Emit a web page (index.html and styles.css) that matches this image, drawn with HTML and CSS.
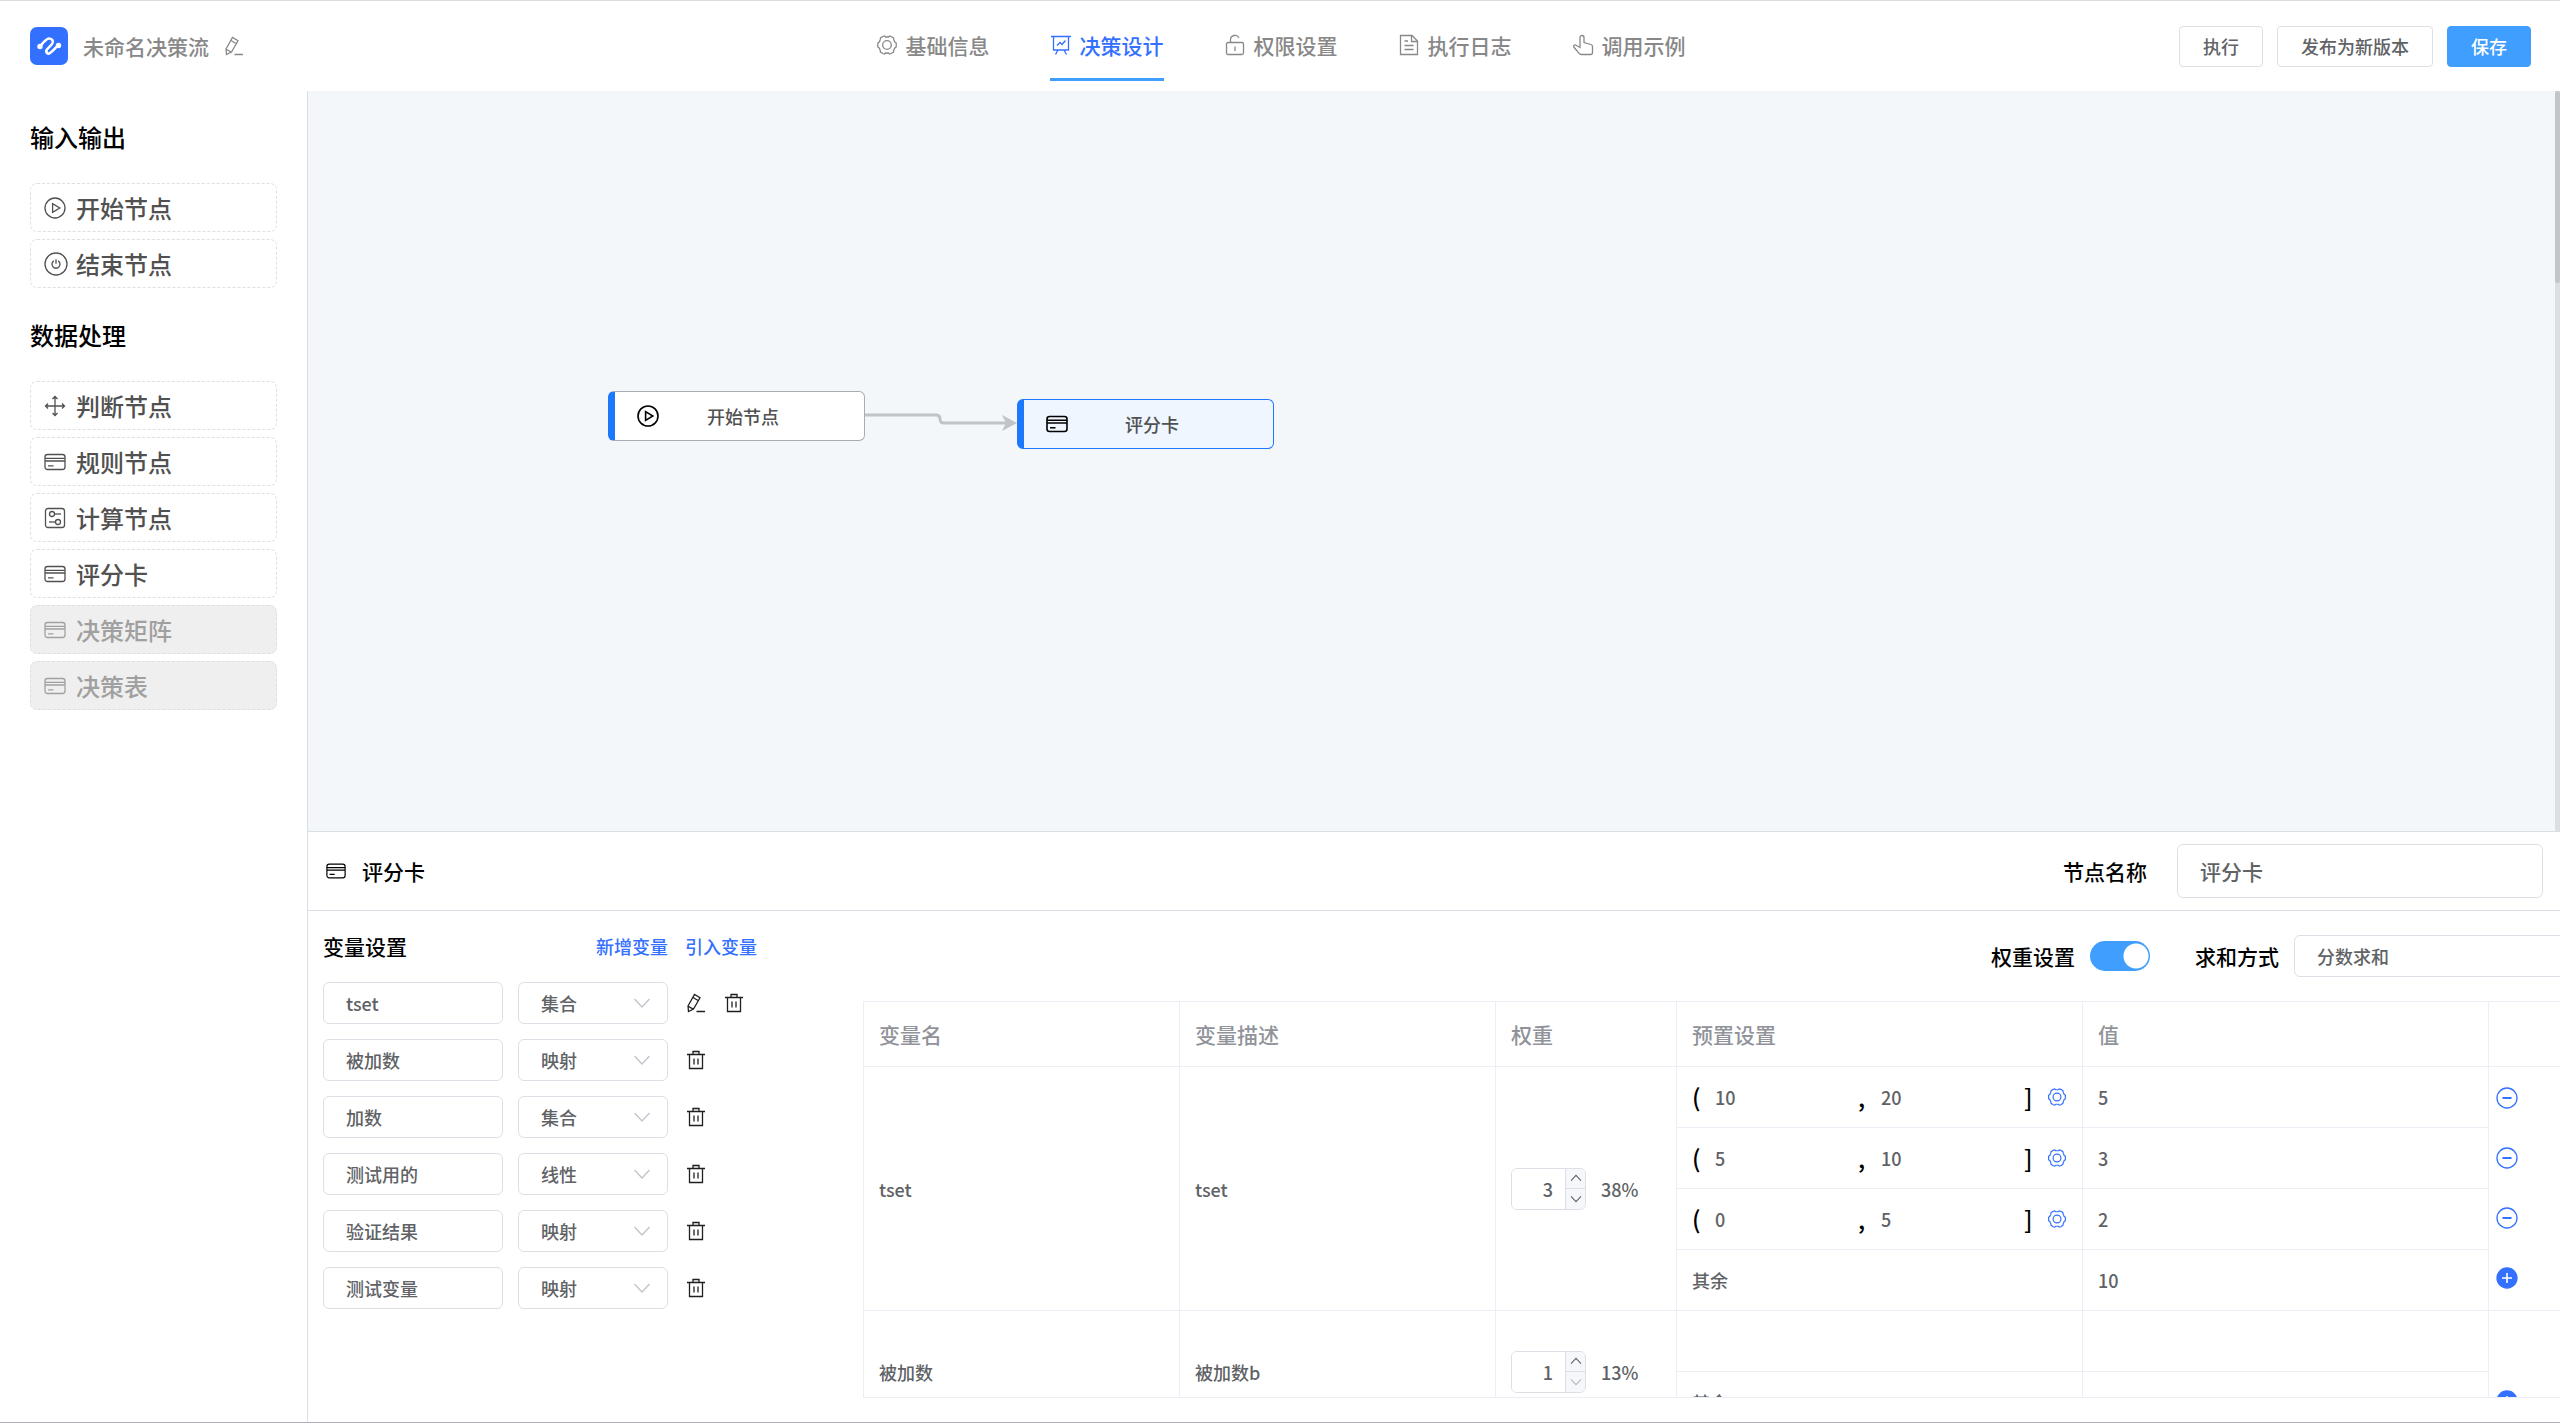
FILE: index.html
```html
<!DOCTYPE html>
<html lang="zh-CN">
<head>
<meta charset="utf-8">
<title>未命名决策流</title>
<meta name="viewport" content="width=device-width, initial-scale=1">
<link rel="stylesheet" href="styles.css">
</head>
<body>
<svg class="sprite" aria-hidden="true">
  <symbol id="i-card" viewBox="0 0 22 22"><rect x="1" y="3.5" width="20" height="15" rx="2.5"/><path d="M1 7.3h20M1 10h20M4 14.8h5.5"/></symbol>
  <symbol id="i-play" viewBox="0 0 22 22"><circle cx="11" cy="11" r="10"/><path d="M8.6 6.6v8.8l7.2-4.4z"/></symbol>
  <symbol id="i-power" viewBox="0 0 24 24"><circle cx="12" cy="12" r="11"/><path d="M9.8 8.9a4 4 0 1 0 4.4 0M12 7.2v4.6"/></symbol>
  <symbol id="i-move" viewBox="0 0 22 22"><path d="M1.5 11h19M11 1.5v19M4 8.500L1.500 11 4 13.500M18 8.500l2.500 2.500-2.500 2.500M8.500 4L11 1.500 13.500 4M8.500 18l2.500 2.500 2.500-2.500"/></symbol>
  <symbol id="i-calc" viewBox="0 0 22 22"><rect x="1.500" y="1.500" width="19" height="19" rx="2.500"/><circle cx="8" cy="7" r="2.500"/><path d="M10.500 7H17"/><circle cx="14" cy="15" r="2.500"/><path d="M11.500 15H5"/></symbol>
  <symbol id="i-gear" viewBox="0 0 22 22"><path d="M6.800 2.500l1.700-.5 1 1h3l1-1 1.700.5 2.300 1.500.3 1.700 1 2.300 1.400 1v4l-1.400 1-1 2.300-.3 1.700-2.300 1.500-1.700.5-1-1h-3l-1 1-1.700-.5L4.500 18l-.3-1.700-1-2.300-1.400-1V9l1.400-1 1-2.300L4.500 4z"/><circle cx="11" cy="11" r="4.300"/></symbol>
  <symbol id="i-board" viewBox="0 0 22 22"><path d="M1 2.500h20M3.500 2.500v13.500h15V2.500M8 16l-2.500 4.500M14 16l2.500 4.500M7 11.500l3-3 2 2 3.500-4"/></symbol>
  <symbol id="i-lock" viewBox="0 0 22 22"><rect x="2.500" y="8.500" width="17" height="12" rx="1.500"/><path d="M6.500 8.500V6a4.500 4.500 0 0 1 8.500-2.200M11 12.500v4.500"/></symbol>
  <symbol id="i-doc" viewBox="0 0 22 22"><path d="M2.500 1.500h11.500L19.500 7v13.500h-17zM13.500 1.500v6h6M6.500 7h3.500M6.500 11.500h9M6.500 15.500h9"/></symbol>
  <symbol id="i-hand" viewBox="0 0 22 22"><path d="M8 13.500V3.500a2 2 0 0 1 4 0V8.500l7 2c1 .4 1.500 1 1.500 2v6c0 1.300-.7 2-2 2H9.500c-1.200 0-2-.4-2.700-1.400L1.800 13c-.9-1.500 1-2.800 2.300-1.700z"/></symbol>
  <symbol id="i-edit" viewBox="0 0 20 20"><path d="M2 13L8.500 1.500l5.500 3.200L7.500 16 2.500 18.500zM7 4.500l5.500 3.200M2.200 13.200l5 2.900M10.500 18.500H19"/></symbol>
  <symbol id="i-trash" viewBox="0 0 20 20"><path d="M1 4.500h18M7 4.500v-3h6v3M3.500 4.500v14h13v-14M8 8.500v6M12 8.500v6"/></symbol>
  <symbol id="i-down" viewBox="0 0 18 18"><path d="M1.500 5L9 13l7.500-8"/></symbol>
  <symbol id="i-up" viewBox="0 0 18 18"><path d="M1.500 13L9 5l7.500 8"/></symbol>
  <symbol id="i-minus" viewBox="0 0 22 22"><circle cx="11" cy="11" r="10"/><path d="M6.500 11h9" stroke-width="2"/></symbol>
  <symbol id="i-plus" viewBox="0 0 22 22"><circle cx="11" cy="11" r="10" fill="currentColor"/><path d="M6 11h10M11 6v10" stroke="#fff" stroke-width="1.600"/></symbol>
</svg>

<div class="app">
  <header class="topbar">
    <div class="brand">
      <svg class="logo" viewBox="0 0 38 38" aria-hidden="true"><rect width="38" height="38" rx="7" fill="#3370ff"/><path d="M10 19.500C13 16 16 11.500 19 11.500c3.500 0 5 3 3 5.500l-5 5.500c-2 3 1 5 3 3.500 3-2 5-5 8.500-8" fill="none" stroke="#fff" stroke-width="2.600" stroke-linecap="round"/><circle cx="10" cy="19.500" r="2.700" fill="#fff"/><circle cx="28.500" cy="18.500" r="2.700" fill="#fff"/></svg>
      <h1 class="flow-name">未命名决策流</h1>
      <button class="icon-btn brand-edit" aria-label="编辑名称"><svg class="icon icon-s"><use href="#i-edit"/></svg></button>
    </div>
    <nav class="tabs">
      <a class="tab" href="#info"><svg class="icon"><use href="#i-gear"/></svg>基础信息</a>
      <a class="tab tab-active" href="#design"><svg class="icon"><use href="#i-board"/></svg>决策设计</a>
      <a class="tab" href="#auth"><svg class="icon"><use href="#i-lock"/></svg>权限设置</a>
      <a class="tab" href="#log"><svg class="icon"><use href="#i-doc"/></svg>执行日志</a>
      <a class="tab" href="#demo"><svg class="icon"><use href="#i-hand"/></svg>调用示例</a>
    </nav>
    <div class="actions">
      <button class="btn">执行</button>
      <button class="btn">发布为新版本</button>
      <button class="btn btn-primary">保存</button>
    </div>
  </header>

  <div class="body">
    <aside class="sidebar">
      <section class="group">
        <h2 class="group-title">输入输出</h2>
        <button class="item"><svg class="icon"><use href="#i-play"/></svg>开始节点</button>
        <button class="item item-wide"><svg class="icon icon-l"><use href="#i-power"/></svg>结束节点</button>
      </section>
      <section class="group">
        <h2 class="group-title">数据处理</h2>
        <button class="item"><svg class="icon"><use href="#i-move"/></svg>判断节点</button>
        <button class="item"><svg class="icon"><use href="#i-card"/></svg>规则节点</button>
        <button class="item"><svg class="icon"><use href="#i-calc"/></svg>计算节点</button>
        <button class="item"><svg class="icon"><use href="#i-card"/></svg>评分卡</button>
        <button class="item" disabled><svg class="icon"><use href="#i-card"/></svg>决策矩阵</button>
        <button class="item" disabled><svg class="icon"><use href="#i-card"/></svg>决策表</button>
      </section>
    </aside>

    <main class="main">
      <section class="canvas">
        <svg class="edge" viewBox="0 0 152 30" aria-hidden="true"><path d="M0 12h71q4 0 4 4t4 4h66" fill="none" stroke="#c0c4c8" stroke-width="3"/><path d="M137 12l15 8-15 8 4-8z" fill="#c0c4c8"/></svg>
        <div class="node node-start"><svg class="icon"><use href="#i-play"/></svg><span class="node-text">开始节点</span></div>
        <div class="node node-card"><svg class="icon"><use href="#i-card"/></svg><span class="node-text">评分卡</span></div>
        <div class="scroll"><div class="scroll-thumb"></div></div>
      </section>

      <section class="drawer">
        <header class="drawer-head">
          <svg class="icon icon-s"><use href="#i-card"/></svg>
          <h2 class="drawer-title">评分卡</h2>
          <label class="label" for="node-name">节点名称</label>
          <input class="field field-name" id="node-name" value="评分卡">
        </header>
        <div class="drawer-body">
          <section class="vars">
            <div class="vars-head">
              <h3 class="label">变量设置</h3>
              <a class="link" href="#new">新增变量</a>
              <a class="link" href="#import">引入变量</a>
            </div>
            <div class="var-row">
              <input class="field" aria-label="变量名" value="tset">
              <div class="select"><select class="field" aria-label="类型"><option>集合</option></select><svg class="icon chevron"><use href="#i-down"/></svg></div>
              <button class="icon-btn" aria-label="编辑"><svg class="icon icon-s"><use href="#i-edit"/></svg></button>
              <button class="icon-btn" aria-label="删除"><svg class="icon icon-s"><use href="#i-trash"/></svg></button>
            </div>
            <div class="var-row">
              <input class="field" aria-label="变量名" value="被加数">
              <div class="select"><select class="field" aria-label="类型"><option>映射</option></select><svg class="icon chevron"><use href="#i-down"/></svg></div>
              <button class="icon-btn" aria-label="删除"><svg class="icon icon-s"><use href="#i-trash"/></svg></button>
            </div>
            <div class="var-row">
              <input class="field" aria-label="变量名" value="加数">
              <div class="select"><select class="field" aria-label="类型"><option>集合</option></select><svg class="icon chevron"><use href="#i-down"/></svg></div>
              <button class="icon-btn" aria-label="删除"><svg class="icon icon-s"><use href="#i-trash"/></svg></button>
            </div>
            <div class="var-row">
              <input class="field" aria-label="变量名" value="测试用的">
              <div class="select"><select class="field" aria-label="类型"><option>线性</option></select><svg class="icon chevron"><use href="#i-down"/></svg></div>
              <button class="icon-btn" aria-label="删除"><svg class="icon icon-s"><use href="#i-trash"/></svg></button>
            </div>
            <div class="var-row">
              <input class="field" aria-label="变量名" value="验证结果">
              <div class="select"><select class="field" aria-label="类型"><option>映射</option></select><svg class="icon chevron"><use href="#i-down"/></svg></div>
              <button class="icon-btn" aria-label="删除"><svg class="icon icon-s"><use href="#i-trash"/></svg></button>
            </div>
            <div class="var-row">
              <input class="field" aria-label="变量名" value="测试变量">
              <div class="select"><select class="field" aria-label="类型"><option>映射</option></select><svg class="icon chevron"><use href="#i-down"/></svg></div>
              <button class="icon-btn" aria-label="删除"><svg class="icon icon-s"><use href="#i-trash"/></svg></button>
            </div>
          </section>

          <section class="score">
            <div class="score-tools">
              <label class="label" for="weight-on">权重设置</label>
              <input class="switch" id="weight-on" type="checkbox" checked>
              <label class="label" for="sum-mode">求和方式</label>
              <select class="field sum-mode" id="sum-mode"><option>分数求和</option></select>
            </div>
            <div class="table-wrap">
              <table class="table">
                <colgroup><col class="col-name"><col class="col-name"><col class="col-weight"><col><col><col class="col-act"></colgroup>
                <thead>
                  <tr><th>变量名</th><th>变量描述</th><th>权重</th><th>预置设置</th><th>值</th><th></th></tr>
                </thead>
                <tbody>
                  <tr>
                    <td rowspan="4">tset</td>
                    <td rowspan="4">tset</td>
                    <td rowspan="4"><div class="weight"><div class="spin"><input class="spin-input" type="number" aria-label="权重" value="3"><div class="spin-btns"><button class="spin-btn" aria-label="增加"><svg class="icon"><use href="#i-up"/></svg></button><button class="spin-btn" aria-label="减少"><svg class="icon"><use href="#i-down"/></svg></button></div></div>38%</div></td>
                    <td><div class="range"><b class="sign">(</b><input class="plain" aria-label="下限" value="10"><b class="sign">,</b><input class="plain" aria-label="上限" value="20"><b class="sign">]</b><button class="icon-btn blue" aria-label="区间设置"><svg class="icon icon-s"><use href="#i-gear"/></svg></button></div></td>
                    <td><input class="plain" aria-label="值" value="5"></td>
                    <td rowspan="4" class="act-cell"><div class="acts">
                      <button class="icon-btn blue" aria-label="删除行"><svg class="icon"><use href="#i-minus"/></svg></button>
                      <button class="icon-btn blue" aria-label="删除行"><svg class="icon"><use href="#i-minus"/></svg></button>
                      <button class="icon-btn blue" aria-label="删除行"><svg class="icon"><use href="#i-minus"/></svg></button>
                      <button class="icon-btn blue" aria-label="新增行"><svg class="icon"><use href="#i-plus"/></svg></button>
                    </div></td>
                  </tr>
                  <tr>
                    <td><div class="range"><b class="sign">(</b><input class="plain" aria-label="下限" value="5"><b class="sign">,</b><input class="plain" aria-label="上限" value="10"><b class="sign">]</b><button class="icon-btn blue" aria-label="区间设置"><svg class="icon icon-s"><use href="#i-gear"/></svg></button></div></td>
                    <td><input class="plain" aria-label="值" value="3"></td>
                  </tr>
                  <tr>
                    <td><div class="range"><b class="sign">(</b><input class="plain" aria-label="下限" value="0"><b class="sign">,</b><input class="plain" aria-label="上限" value="5"><b class="sign">]</b><button class="icon-btn blue" aria-label="区间设置"><svg class="icon icon-s"><use href="#i-gear"/></svg></button></div></td>
                    <td><input class="plain" aria-label="值" value="2"></td>
                  </tr>
                  <tr>
                    <td>其余</td>
                    <td><input class="plain" aria-label="值" value="10"></td>
                  </tr>
                  <tr>
                    <td rowspan="2">被加数</td>
                    <td rowspan="2">被加数b</td>
                    <td rowspan="2"><div class="weight"><div class="spin"><input class="spin-input" type="number" aria-label="权重" value="1"><div class="spin-btns"><button class="spin-btn" aria-label="增加"><svg class="icon"><use href="#i-up"/></svg></button><button class="spin-btn" aria-label="减少" disabled><svg class="icon"><use href="#i-down"/></svg></button></div></div>13%</div></td>
                    <td></td>
                    <td></td>
                    <td rowspan="2" class="act-cell"><div class="acts acts-end">
                      <button class="icon-btn blue" aria-label="新增行"><svg class="icon"><use href="#i-plus"/></svg></button>
                    </div></td>
                  </tr>
                  <tr>
                    <td>其余</td>
                    <td></td>
                  </tr>
                </tbody>
              </table>
            </div>
          </section>
        </div>
      </section>
    </main>
  </div>
</div>
</body>
</html>
```
FILE: styles.css
```css
* { box-sizing: border-box; }

body {
  margin: 0;
  font-family: "Noto Sans CJK SC", "Noto Sans", sans-serif;
  font-size: 18px;
  font-weight: 500;
  line-height: 24px;
  color: #606266;
  background: #fff;
}

h1, h2, h3 { margin: 0; font-weight: 500; }
a { text-decoration: none; }
button, input, select { font: inherit; color: inherit; margin: 0; }
button { padding: 0; border: 0; background: none; cursor: pointer; }

.sprite { display: none; }

.icon {
  flex: none;
  display: block;
  width: 22px;
  height: 22px;
  fill: none;
  stroke: currentColor;
  stroke-width: 1.3;
}
.icon-s { width: 20px; height: 20px; }
.icon-l { width: 24px; height: 24px; }
.icon-btn { flex: none; display: flex; color: #1f1f1f; }
.blue { color: #3370ff; }

.app {
  display: flex;
  flex-direction: column;
  height: 100vh;
  overflow: hidden;
  border-top: 1px solid #dcdcdc;
  border-bottom: 1px solid #adb0b8;
}

/* Top bar */
.topbar {
  flex: none;
  display: grid;
  grid-template-columns: 1fr auto 1fr;
  align-items: center;
  height: 90px;
  padding: 0 29px 0 30px;
}
.brand { display: flex; align-items: center; }
.logo { width: 38px; height: 38px; }
.flow-name { margin: 0 15px; font-size: 21px; color: #888; }
.brand-edit { color: #888; }
.tabs { display: flex; gap: 60px; height: 90px; }
.tab {
  display: flex;
  align-items: center;
  gap: 8px;
  height: 80px;
  padding-top: 11px;
  border-bottom: 3px solid transparent;
  font-size: 21px;
  color: #888;
}
.tab-active { color: #3370ff; border-color: #409eff; }
.actions { display: flex; justify-content: flex-end; gap: 14px; }
.btn {
  height: 41px;
  padding: 0 23px;
  border: 1px solid #dcdfe6;
  border-radius: 4px;
  background: #fff;
}
.btn-primary { border-color: #409eff; background: #409eff; color: #fff; }

/* Node palette */
.body { flex: 1; display: flex; min-height: 0; }
.sidebar {
  flex: none;
  width: 308px;
  padding: 30px 30px 0;
  border-right: 1px solid #dadfe5;
}
.group { display: flex; flex-direction: column; gap: 7px; margin-bottom: 31px; }
.group-title { margin-bottom: 23px; font-size: 24px; line-height: 32px; color: #000; }
.item {
  display: flex;
  align-items: center;
  gap: 10px;
  height: 49px;
  padding: 0 13px;
  border: 1px dashed #dcdfe6;
  border-radius: 7px;
  font-size: 24px;
  color: #515151;
}
.item-wide { gap: 8px; }
.item:disabled { background: #efefef; color: #a0a0a0; }

/* Flow canvas */
.main { flex: 1; display: flex; flex-direction: column; min-width: 0; }
.canvas { position: relative; flex: 1; background: #f3f7fa; }
.node {
  position: absolute;
  display: flex;
  align-items: center;
  width: 257px;
  height: 50px;
  padding: 0 37px 0 22px;
  border: 1px solid #a8adb3;
  border-left: 7px solid #1b78ff;
  border-radius: 6px;
  background: #fff;
  color: #000;
}
.node .icon { stroke-width: 1.6; }
.node-text { flex: 1; text-align: center; color: #515151; }
.node-start { left: 300px; top: 300px; }
.node-card { left: 709px; top: 308px; border-color: #1b78ff; background: #eff6ff; }
.edge { position: absolute; left: 557px; top: 312px; width: 152px; height: 30px; }
.scroll { position: absolute; right: 0; top: 0; width: 5px; height: 100%; background: #dadfe2; }
.scroll-thumb { height: 26%; border-radius: 3px; background: #c3c6c8; }

/* Node settings */
.drawer {
  flex: 0 1 591px;
  display: flex;
  flex-direction: column;
  min-height: 0;
  border-top: 1px solid #dadfe5;
}
.drawer-head {
  flex: none;
  display: flex;
  align-items: center;
  height: 79px;
  padding: 0 17px 0 18px;
  border-bottom: 1px solid #dadfe5;
  color: #000;
}
.drawer-title { margin: 0 auto 0 16px; font-size: 21px; }
.label { font-size: 21px; color: #000; }
.field {
  display: block;
  width: 180px;
  height: 42px;
  padding: 0 22px;
  border: 1px solid #dcdfe6;
  border-radius: 6px;
  background: #fff;
  color: #606266;
  appearance: none;
}
.field-name { width: 366px; height: 54px; margin-left: 30px; font-size: 21px; }
.drawer-body { flex: 1; display: flex; gap: 106px; min-height: 0; padding-left: 15px; }

.vars { flex: none; display: flex; flex-direction: column; gap: 15px; width: 434px; }
.vars-head { display: flex; align-items: center; gap: 17px; height: 56px; padding-top: 14px; }
.vars-head .label { margin-right: auto; }
.link { color: #3370ff; }
.var-row { display: flex; align-items: center; }
.var-row .icon-btn { margin-left: 18px; }
.select { position: relative; margin-left: 15px; }
.select .field { width: 150px; }
.chevron { position: absolute; right: 17px; top: 12px; width: 18px; height: 18px; color: #c0c4cc; }

.score { flex: 1; display: flex; flex-direction: column; min-width: 0; overflow: hidden; padding: 24px 0; }
.score-tools {
  flex: none;
  display: flex;
  align-items: center;
  justify-content: flex-end;
  width: calc(100% + 34px);
  margin-bottom: 24px;
}
.switch {
  appearance: none;
  width: 60px;
  height: 30px;
  margin: 0 45px 0 15px;
  border-radius: 15px;
  background: radial-gradient(circle at 46px 15px, #fff 12px, #409eff 13px);
}
.sum-mode { width: 300px; margin-left: 15px; }
.table-wrap { flex: 1; min-height: 0; overflow: hidden; border: solid #ebeef5; border-width: 1px 0 1px 1px; }

.table { width: calc(100% + 35px); table-layout: fixed; border-collapse: separate; border-spacing: 0; }
.col-name { width: 316px; }
.col-weight { width: 181px; }
.col-act { width: 106px; }
.table th, .table td {
  height: 61px;
  padding: 0 15px;
  border: solid #ebeef5;
  border-width: 0 1px 1px 0;
  text-align: left;
}
.table th { height: 65px; font-size: 21px; font-weight: 500; color: #909399; }
.table .act-cell { padding: 20px 7px; vertical-align: top; }
.acts { display: flex; flex-direction: column; gap: 38px; }
.acts-end { padding-top: 59px; }
.plain { display: block; flex: 1; width: 100%; min-width: 0; height: 40px; padding: 0; border: 0; background: none; }
.range { display: flex; align-items: center; }
.sign { width: 23px; font-size: 24px; font-weight: 500; color: #000; }
.weight { display: flex; align-items: center; gap: 15px; }
.spin { display: flex; width: 75px; height: 42px; border: 1px solid #dcdfe6; border-radius: 6px; overflow: hidden; }
.spin-input { flex: 1; min-width: 0; padding: 0 12px 0 0; border: 0; text-align: right; appearance: textfield; }
.spin-input::-webkit-inner-spin-button { display: none; }
.spin-btns { display: flex; flex-direction: column; width: 20px; border-left: 1px solid #dcdfe6; background: #f5f7fa; }
.spin-btn { flex: 1; display: flex; align-items: center; justify-content: center; color: #606266; }
.spin-btn + .spin-btn { border-top: 1px solid #dcdfe6; }
.spin-btn:disabled { color: #b4b8be; }
.spin-btn .icon { width: 12px; height: 12px; stroke-width: 1.6; }
```
